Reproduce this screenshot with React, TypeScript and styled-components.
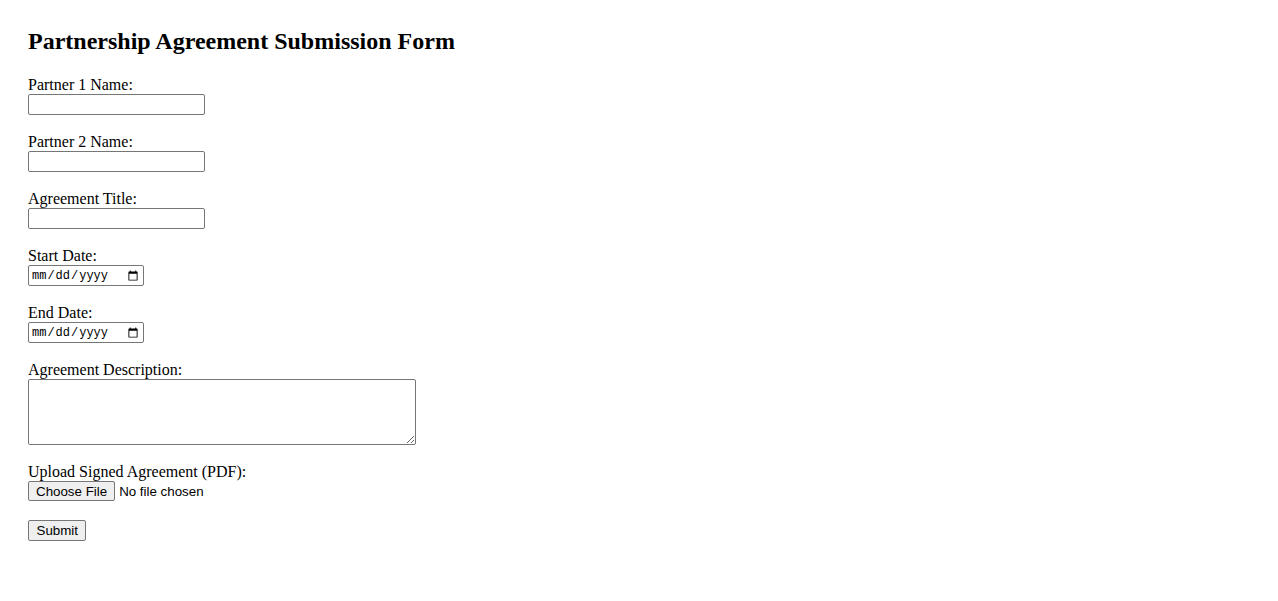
import React from "react";
import styled, { createGlobalStyle } from "styled-components";

const GlobalStyle = createGlobalStyle`
  html, body { background: #ffffff; }
  body {
    margin: 8px;
    font-family: "Liberation Serif", "Times New Roman", serif;
    font-size: 16px;
    color: #000000;
  }
`;

const Page = styled.div`
  padding: 0 20px;
`;

const Title = styled.h2`
  font-family: "Liberation Serif", "Times New Roman", serif;
  font-size: 24px;
  font-weight: bold;
  margin: 20px 0 21px 0;
  line-height: normal;
`;

const Form = styled.form`
  display: flex;
  flex-direction: column;
  align-items: flex-start;
`;

const Field = styled.div`
  display: flex;
  flex-direction: column;
  align-items: flex-start;
  margin-bottom: 18px;
`;

const Label = styled.label`
  display: block;
  line-height: 18px;
`;

const TextInput = styled.input`
  box-sizing: border-box;
  width: 177px;
  height: 21px;
  margin: 0;
  padding: 1px 2px;
  border: 1px solid #767676;
  border-radius: 2px;
  font-family: "Liberation Sans", Arial, sans-serif;
  font-size: 13.33px;
  background: #ffffff;
`;

const DateInput = styled.input`
  box-sizing: border-box;
  width: 116px;
  height: 21px;
  margin: 0;
  padding: 1px 2px;
  border: 1px solid #767676;
  border-radius: 2px;
  font-family: "Liberation Mono", "DejaVu Sans Mono", monospace;
  font-size: 12px;
  background: #ffffff;
`;

const TextArea = styled.textarea`
  box-sizing: border-box;
  display: block;
  width: 388px;
  height: 66px;
  margin: 0;
  padding: 2px;
  border: 1px solid #767676;
  border-radius: 2px;
  font-family: "Liberation Mono", monospace;
  font-size: 13.33px;
  background: #ffffff;
`;

const FileInput = styled.input`
  margin: 0;
  height: 21px;
  font-family: "Liberation Sans", Arial, sans-serif;
  font-size: 13.33px;
  color: #000000;

  &::file-selector-button {
    box-sizing: border-box;
    height: 20px;
    margin: 0 4px 0 0;
    padding: 1px 7px;
    border: 1px solid #767676;
    border-radius: 2px;
    background: #efefef;
    font-family: "Liberation Sans", Arial, sans-serif;
    font-size: 13.33px;
    color: #000000;
  }
`;

const SubmitButton = styled.button`
  box-sizing: border-box;
  height: 21px;
  margin: 0;
  padding: 1px 7.5px;
  border: 1px solid #767676;
  border-radius: 2px;
  background: #efefef;
  font-family: "Liberation Sans", Arial, sans-serif;
  font-size: 13.33px;
  color: #000000;
`;

export default function App() {
  return (
    <>
      <GlobalStyle />
      <Page>
        <Title>Partnership Agreement Submission Form</Title>
        <Form onSubmit={(e) => e.preventDefault()}>
          <Field>
            <Label htmlFor="p1">Partner 1 Name:</Label>
            <TextInput id="p1" type="text" />
          </Field>
          <Field>
            <Label htmlFor="p2">Partner 2 Name:</Label>
            <TextInput id="p2" type="text" />
          </Field>
          <Field>
            <Label htmlFor="title">Agreement Title:</Label>
            <TextInput id="title" type="text" />
          </Field>
          <Field>
            <Label htmlFor="start">Start Date:</Label>
            <DateInput id="start" type="date" />
          </Field>
          <Field>
            <Label htmlFor="end">End Date:</Label>
            <DateInput id="end" type="date" />
          </Field>
          <Field>
            <Label htmlFor="desc">Agreement Description:</Label>
            <TextArea id="desc" />
          </Field>
          <Field>
            <Label htmlFor="file">Upload Signed Agreement (PDF):</Label>
            <FileInput id="file" type="file" accept="application/pdf" />
          </Field>
          <SubmitButton type="submit">Submit</SubmitButton>
        </Form>
      </Page>
    </>
  );
}
